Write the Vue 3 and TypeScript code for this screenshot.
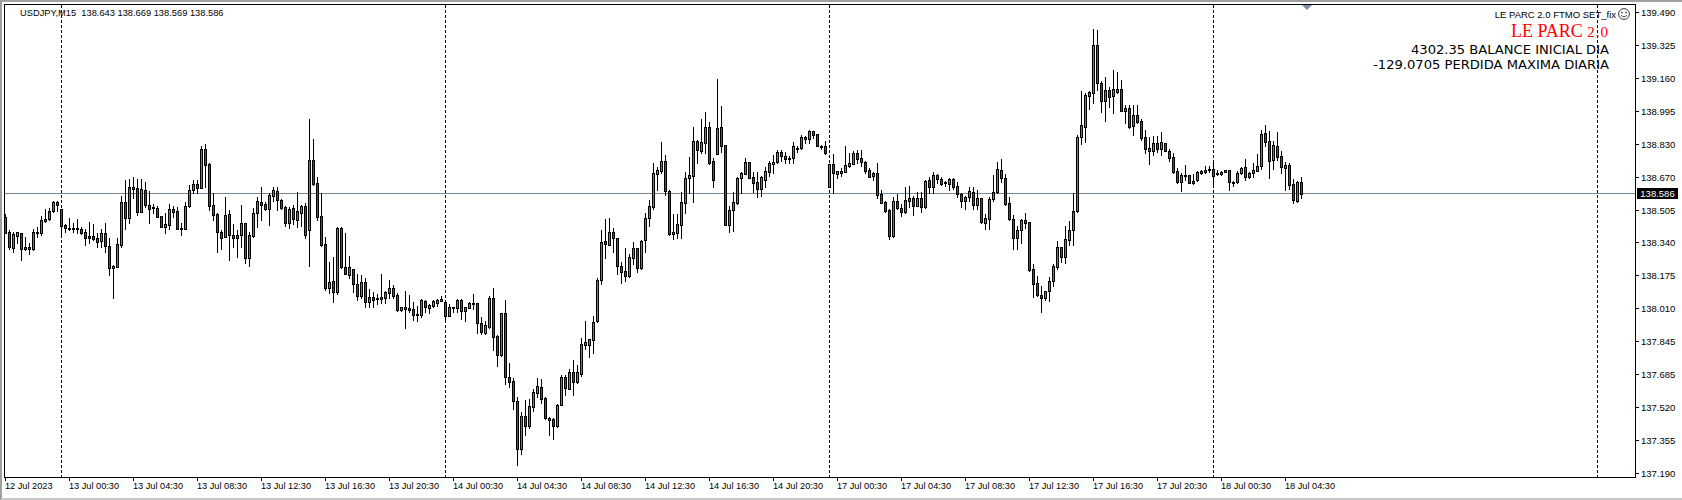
<script setup lang="ts">
interface Candle { x: number; high: number; top: number; bottom: number; low: number; up: boolean }

const segments: [number, number, string][] = [
  [0, 130, 'R252,262,308,308 R300,306,350,358 G305,313,353,365 G305,307,317,338 R308,310,356,390 R320,352,357,360 R338,352,358,372 G297,307,358,360 G292,307,310,322 G258,271,308,316 G238,267,272,276 G234,243,268,270 G212,217,244,246 R212,217,224,243 R236,238,287,314 R282,286,295,305 G264,295,297,300 G280,295,298,305 G268,295,298,310 R292,298,308,312 R296,307,323,345 R277,319,323,340 R282,319,326,330 R310,325,335,352 G296,310,334,352 R280,310,349,365 R325,349,415,435 G405,408,415,503 G323,343,410,412 G198,217,344,352 R150,217,263,296 G148,172,263,280 G140,172,176,203 R148,175,245,255 G148,178,245,245 R155,181,224,232 R182,224,236,278 G222,232,235,250 R228,235,260,262 R258,258,290,290 G250,283,290,308 G222,238,284,298 R228,238,245,262 R232,244,298,298 G280,295,298,314 G215,229,296,298 G165,181,229,232 G150,163,181,190 R150,163,173,188 G48,58,173,175 R43,58,104,172 R100,103,227,240 R190,226,254,270 R248,253,307,365 R300,307,323,357 G202,256,320,320 R240,253,314,390 R282,314,323,352 G300,316,323,380 G225,280,314,352 R278,280,383,398 G306,316,383,407 G235,250,318,320 G200,213,248,290 R172,217,224,270 R215,223,236,240 G190,196,236,285 G172,181,197,212 R172,184,211,240 R206,211,233,238 R228,232,278,288 G232,237,278,293 R226,235,266,282 G186,243,269,292'],
  [74, 130, 'G225,228,248,288 R220,228,314,323 G-33,91,301,408 R27,91,162,165 R142,160,260,270 R190,259,345,347 R322,343,473,480 G397,457,473,488 R382,454,485,515 G292,295,485,491 R292,295,412,414 R310,412,431,433 G378,412,434,443 R418,418,463,485 R433,463,497,510 G435,457,497,503 R445,457,517,530 G477,502,517,530 R487,502,509,530 G492,504,508,522 G433,502,506,518 G483,487,503,518 G450,475,489,505 R465,475,497,505 R490,496,540,542 G530,532,540,542 G483,532,536,594 G495,535,540,545 R517,538,554,570 G528,552,555,572 G508,510,554,560 R510,512,530,545 G522,526,535,550 G510,514,527,530 G507,511,519,528 G499,508,512,514 R516,517,557,570 G522,532,557,558 G530,532,534,545'],
  [113, 290, 'G28,30,53,66 R28,30,64,87 G50,52,64,93 G35,38,53,55 G12,40,42,57 R40,40,100,128'],
  [119, 220, 'R290,310,335,342 G303,316,339,342 G228,235,320,325 R205,235,350,390 R345,349,404,438 G280,280,405,408 R240,280,470,492 R430,470,485,500 R475,484,542,566 R530,544,686,735 G577,589,686,702 R540,589,617,645 G538,559,617,624 G508,517,560,572 G475,499,518,530 R478,502,536,548 R530,535,594,596 G592,595,599,645 R595,598,617,657 G553,555,618,620 G465,472,556,556 R465,472,505,525 G448,457,506,506 R420,457,485,525 G435,457,485,488 G355,373,462,467 G304,367,374,387 G358,358,374,410 G288,307,359,398 G175,181,304,306 G30,67,179,192 R-3,64,73,113 G-6,37,74,75 R25,37,53,95 R55,55,139,162 R125,139,155,188 R85,154,167,182 G102,111,167,170 G65,85,113,132 R85,85,143,155 G60,64,143,146'],
  [160, 70, 'G430,445,510,545 G390,408,443,468 G280,310,410,418 G290,301,311,360 G216,273,302,310 R255,273,362,375 R361,362,492,495 G433,487,491,508 G433,462,488,505 G365,397,464,505 G305,324,398,430 G262,315,323,370 G170,213,317,396 R210,213,241,278 G147,216,242,250 G126,171,218,248 R157,171,279,282 R265,273,331,351 G27,174,251,253 R108,171,227,245 R226,226,464,466 G407,421,465,485 G365,396,421,484 G320,324,398,403 G305,309,325,370 G265,277,311,313 R277,277,323,325 R305,322,339,365 R305,337,356,380 G318,322,356,378 G292,304,329,352 G272,280,305,318 G255,277,282,310 G240,246,277,280 R240,246,259,272 R245,259,266,278 G258,264,266,278 G215,229,265,280 G228,233,236,246 G195,202,235,237 R198,202,208,218 G180,184,208,218 R182,184,194,205 R192,193,227,228 G225,227,231,238 R213,229,250,252'],
  [206, 130, 'G102,102,170,170 R72,102,130,190 G122,122,131,145 G115,122,130,138 G48,106,127,127 G70,100,107,110 G63,70,101,101 R60,70,86,100 R60,85,95,108 R92,97,122,128 R115,120,140,142 G125,130,137,150 R99,130,196,203 R180,193,218,220 R212,217,242,245 R238,240,317,326 G202,214,318,320 R192,214,235,237 R222,235,245,258 G170,211,246,250 G168,205,212,230 R197,205,227,255 G187,205,227,228 R187,205,230,245 G150,153,231,233 R142,151,170,190 G127,135,170,190 R133,136,146,158 R140,146,161,165 G152,157,158,167 G144,148,161,180 R143,148,171,176 R155,169,193,200 R188,193,212,230 G198,200,212,236 G172,184,200,212 R170,187,224,236 G180,205,224,238 R203,205,275,278 G252,265,278,296 G200,208,268,296 G135,187,208,212 G97,118,186,188'],
  [249, 20, 'R418,450,473,486 R462,475,551,555 R532,550,598,600 R585,598,653,687 G618,631,653,687 G598,601,631,670 R580,601,608,624 R607,607,750,752 R732,748,791,830 R768,790,825,828 R798,824,833,876 G812,814,833,840 G770,784,812,842 G733,739,782,797 G663,682,740,746 R682,682,710,725 G618,658,710,728 G603,631,659,675 G520,574,631,675 G345,352,574,576 G212,316,352,372 G218,226,320,365 G212,217,227,268 G27,76,220,248 R30,76,188,210 R183,190,242,276 G170,211,242,302 R200,211,230,262 G150,208,227,278 G155,208,215,220 R180,208,272,272 G255,265,272,308 R255,265,320,323 G255,286,317,345 R255,286,305,310 R297,304,353,360 R330,350,386,398 G350,385,392,432 G348,370,392,404 R348,370,386,396 G337,367,386,405 R370,370,392,392 R388,394,413,422 R400,412,455,458 R445,454,485,490 G458,465,485,513 G435,466,468,480 R466,466,490,490 G462,484,490,492 G452,457,481,483 G450,453,458,462 G438,450,455,458 G438,448,451,455 R430,448,467,500 G450,459,463,465 G452,455,461,465 G451,451,455,455 R451,451,487,510 G484,486,488,497 G453,460,487,488 G440,443,458,462 R418,442,470,480 G456,460,470,475 G430,451,460,470 G402,439,452,452 G330,343,439,448 R315,340,365,378 R333,364,422,475 G362,376,421,447 R337,379,410,420 R393,409,440,458 G425,436,443,510 R430,436,494,508 R478,493,541,548 G484,487,542,545 R472,487,521,533'],
]

const candles: Candle[] = segments.flatMap(([start, base, rows]) =>
  rows.split(' ').map((row, k) => {
    const [high, top, bottom, low] = row.slice(1).split(',').map((v) => Math.round(base + Number(v) / 3))
    return { x: 5 + 4 * (start + k), high, top, bottom: Math.max(bottom, top + 1), low, up: row[0] === 'G' }
  }),
)

const dashed = [61, 445, 829, 1213, 1597]
const prices = ['139.490', '139.325', '139.160', '138.995', '138.830', '138.670', '138.505', '138.340', '138.175', '138.010', '137.845', '137.685', '137.520', '137.355', '137.190']
const times = ['12 Jul 2023', '13 Jul 00:30', '13 Jul 04:30', '13 Jul 08:30', '13 Jul 12:30', '13 Jul 16:30', '13 Jul 20:30', '14 Jul 00:30', '14 Jul 04:30', '14 Jul 08:30', '14 Jul 12:30', '14 Jul 16:30', '14 Jul 20:30', '17 Jul 00:30', '17 Jul 04:30', '17 Jul 08:30', '17 Jul 12:30', '17 Jul 16:30', '17 Jul 20:30', '18 Jul 00:30', '18 Jul 04:30']
</script>

<template>
  <div class="terminal">
    <div class="chart">
      <div class="plot">
        <svg class="canvas" width="1630" height="472" viewBox="5 5 1630 472">
          <line v-for="x in dashed" :key="x" :x1="x + 0.5" :x2="x + 0.5" y1="5" y2="477" class="dash" />
          <rect x="5" y="193" width="1630" height="1" fill="#778899" />
          <g v-for="c in candles" :key="c.x">
            <rect :x="c.x" :y="c.high" width="1" :height="c.low - c.high + 1" fill="#000" />
            <rect :x="c.x - 1" :y="c.top" width="3" :height="c.bottom - c.top + 1" fill="#000" />
            <rect v-if="c.bottom - c.top > 1" :x="c.x" :y="c.top + 1" width="1" :height="c.bottom - c.top - 1" :fill="c.up ? '#2ea83a' : '#e00f1c'" />
          </g>
        </svg>
        <div class="symbol">USDJPY,M15&nbsp; 138.643 138.669 138.569 138.586</div>
        <div class="shift-marker"></div>
        <div class="indicator">
          <div class="ea-name">
            <span>LE PARC 2.0 FTMO SET_fix</span>
            <svg class="smiley" width="12" height="12" viewBox="0 0 12 12">
              <circle cx="6" cy="6" r="5.4" fill="none" stroke="#222" stroke-width="0.9" />
              <circle cx="4" cy="4.5" r="0.8" fill="#222" />
              <circle cx="8" cy="4.5" r="0.8" fill="#222" />
              <path d="M3.2 7.2 C4.2 9.2 7.8 9.2 8.8 7.2" fill="none" stroke="#222" stroke-width="0.9" />
            </svg>
          </div>
          <div class="brand">LE PARC <span class="old">2.0</span></div>
          <div class="stat">4302.35 BALANCE INICIAL DIA</div>
          <div class="stat">-129.0705 PERDIDA MAXIMA DIARIA</div>
        </div>
      </div>
      <div class="price-axis">
        <div v-for="p in prices" :key="p" class="price">{{ p }}</div>
        <div class="current">138.586</div>
      </div>
      <div class="time-axis">
        <div v-for="t in times" :key="t" class="time">{{ t }}</div>
      </div>
    </div>
  </div>
</template>

<style>
html, body { margin: 0; background: #fff; }
</style>

<style scoped>
.terminal {
  width: 1682px;
  height: 500px;
  box-sizing: border-box;
  border-top: 2px solid #a0a0a0;
  border-left: 2px solid #a0a0a0;
  border-bottom: 2px solid #c8c8c8;
  padding: 2px 0 0 2px;
  background: #fff;
  font-family: "Liberation Sans", Arial, sans-serif;
  color: #000;
}
.chart {
  display: grid;
  grid-template-columns: 1632px 46px;
  grid-template-rows: 474px 20px;
}
.plot {
  position: relative;
  box-sizing: border-box;
  border: 1px solid #000;
  overflow: hidden;
}
.canvas {
  display: block;
  shape-rendering: crispEdges;
}
.dash {
  stroke: #000;
  stroke-width: 1;
  stroke-dasharray: 3 2;
}
.symbol {
  position: absolute;
  left: 15px;
  top: 2px;
  font-size: 9.3px;
  line-height: 13px;
  white-space: nowrap;
}
.shift-marker {
  position: absolute;
  left: 1297px;
  top: 0;
  width: 0;
  height: 0;
  border-left: 5px solid transparent;
  border-right: 5px solid transparent;
  border-top: 5px solid #7b8ea3;
}
.indicator {
  position: absolute;
  top: 2px;
  right: 5px;
  display: flex;
  flex-direction: column;
  align-items: flex-end;
  white-space: nowrap;
}
.ea-name {
  display: flex;
  align-items: center;
  gap: 2px;
  height: 14px;
  font-size: 9.5px;
}
.smiley { display: block; }
.brand {
  margin-right: 21px;
  font-family: "Liberation Serif", serif;
  font-size: 18px;
  line-height: 20px;
  color: #ff0000;
}
.old {
  font-size: 15px;
  letter-spacing: 1px;
}
.stat {
  margin-right: 21px;
  font-family: "DejaVu Sans", sans-serif;
  font-size: 13.1px;
  line-height: 15px;
}
.price-axis {
  position: relative;
  display: flex;
  flex-direction: column;
  gap: 15.93px;
}
.price {
  position: relative;
  height: 17px;
  padding-left: 5px;
  font-size: 9.5px;
  line-height: 17px;
}
.price::before {
  content: "";
  position: absolute;
  left: 0;
  top: 8px;
  width: 3px;
  height: 1px;
  background: #000;
}
.current {
  position: absolute;
  left: 1px;
  top: 184px;
  width: 41px;
  height: 11px;
  background: #000;
  color: #fff;
  font-size: 9.5px;
  line-height: 11px;
  text-align: center;
}
.time-axis {
  display: flex;
  padding-left: 1px;
}
.time {
  position: relative;
  flex: 0 0 64px;
  padding-top: 2px;
  font-size: 9.2px;
  line-height: 12px;
  white-space: nowrap;
}
.time::before {
  content: "";
  position: absolute;
  left: 0;
  top: 0;
  width: 1px;
  height: 3px;
  background: #000;
}
</style>
